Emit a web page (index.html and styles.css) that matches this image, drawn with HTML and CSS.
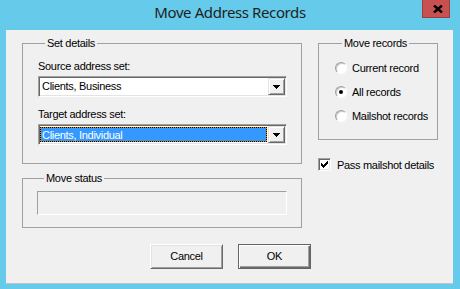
FILE: index.html
```html
<!DOCTYPE html>
<html>
<head>
<meta charset="utf-8">
<title>Move Address Records</title>
<link rel="stylesheet" href="styles.css">
</head>
<body>
<div class="titlebar">
  <span></span>
  <div class="title">Move Address Records</div>
  <div class="close">
    <svg width="10" height="8" viewBox="0 0 10 8"><path d="M1 0.5 L9 7.5 M9 0.5 L1 7.5" stroke="#000" stroke-width="2.4" fill="none"/></svg>
  </div>
</div>
<div class="client">
  <div class="main">
    <div class="col-left">
      <div class="group set-details">
        <span class="legend">Set details</span>
        <div class="field-label first">Source address set:</div>
        <div class="combo">
          <div class="combo-text">Clients, Business</div>
          <div class="drop"><svg width="7" height="4" viewBox="0 0 7 4"><rect x="0" y="0" width="7" height="1"/><rect x="1" y="1" width="5" height="1"/><rect x="2" y="2" width="3" height="1"/><rect x="3" y="3" width="1" height="1"/></svg></div>
        </div>
        <div class="field-label second">Target address set:</div>
        <div class="combo">
          <div class="combo-text selected">Clients, Individual</div>
          <div class="drop"><svg width="7" height="4" viewBox="0 0 7 4"><rect x="0" y="0" width="7" height="1"/><rect x="1" y="1" width="5" height="1"/><rect x="2" y="2" width="3" height="1"/><rect x="3" y="3" width="1" height="1"/></svg></div>
        </div>
      </div>
      <div class="group move-status">
        <span class="legend">Move status</span>
        <div class="progress"></div>
      </div>
    </div>
    <div class="col-right">
      <div class="group move-records">
        <span class="legend">Move records</span>
        <div class="opt"><span class="radio"></span><span>Current record</span></div>
        <div class="opt"><span class="radio checked"></span><span>All records</span></div>
        <div class="opt"><span class="radio"></span><span>Mailshot records</span></div>
      </div>
      <div class="check-row">
        <span class="checkbox"><svg width="13" height="13" viewBox="0 0 13 13"><rect x="3" y="5" width="1" height="3"/><rect x="4" y="6" width="1" height="3"/><rect x="5" y="7" width="1" height="3"/><rect x="6" y="6" width="1" height="3"/><rect x="7" y="5" width="1" height="3"/><rect x="8" y="4" width="1" height="3"/><rect x="9" y="3" width="1" height="3"/></svg></span>
        <span>Pass mailshot details</span>
      </div>
    </div>
  </div>
  <div class="buttons">
    <div class="btn">Cancel</div>
    <div class="btn default">OK</div>
  </div>
</div>
</body>
</html>
```
FILE: styles.css
```css
html, body {
  margin: 0;
  padding: 0;
}
body {
  background: #66cbea;
  width: 460px;
  height: 289px;
  overflow: hidden;
  font-family: "Liberation Sans", Arial, sans-serif;
  font-size: 11px;
  letter-spacing: -0.3px;
  color: #000;
}
.titlebar {
  height: 30px;
  display: grid;
  grid-template-columns: 1fr auto 1fr;
  align-items: start;
}
.title {
  font-family: "Noto Sans", "Open Sans", sans-serif;
  font-size: 15px;
  letter-spacing: -0.4px;
  line-height: 24px;
  color: #1e1e1e;
}
.close {
  justify-self: end;
  margin-right: 10px;
  width: 28px;
  height: 18px;
  box-sizing: border-box;
  background: #c75050;
  border: 1px solid #9c3c3c;
  border-top: none;
  display: flex;
  align-items: center;
  justify-content: center;
  padding-left: 4px;
}
.close svg {
  display: block;
}
.client {
  margin-left: 6px;
  width: 447px;
  height: 254px;
  box-sizing: border-box;
  background: #f0f0f0;
  border-bottom: 1px solid #c4c4c4;
  padding: 13px 0 0 16px;
}
.main {
  display: flex;
  gap: 16px;
  align-items: flex-start;
}
.col-left {
  width: 280px;
  display: flex;
  flex-direction: column;
  gap: 14px;
}
.col-right {
  width: 120px;
  display: flex;
  flex-direction: column;
}
.group {
  border: 1px solid #a0a0a0;
  box-sizing: border-box;
}
.legend {
  display: block;
  width: fit-content;
  margin: -7px 0 0 7px;
  padding: 0 2px;
  background: #f0f0f0;
  line-height: 13px;
}
.set-details {
  padding: 0 14px 18px 15px;
}
.field-label {
  line-height: 13px;
}
.field-label.first {
  margin-top: 10px;
}
.field-label.second {
  margin-top: 11px;
}
.combo {
  margin-top: 3px;
  height: 21px;
  box-sizing: border-box;
  border: 1px solid;
  border-color: #a0a0a0 #ffffff #ffffff #a0a0a0;
  box-shadow: inset 1px 1px 0 #696969, inset -1px -1px 0 #e3e3e3;
  background: #fff;
  display: flex;
  padding: 1px;
}
.combo-text {
  flex: 1;
  line-height: 17px;
  padding-left: 2px;
  white-space: nowrap;
}
.combo-text.selected {
  margin: 1px 1px 1px 0;
  line-height: 15px;
  border: 1px dotted #000;
  background: linear-gradient(#3399ff, #3399ff) padding-box, #f08000 border-box;
  color: #fff;
  padding-left: 1px;
}
.drop {
  width: 17px;
  height: 17px;
  box-sizing: border-box;
  background: #f0f0f0;
  border: 1px solid;
  border-color: #e3e3e3 #696969 #696969 #e3e3e3;
  box-shadow: inset 1px 1px 0 #ffffff, inset -1px -1px 0 #a0a0a0;
  display: flex;
  align-items: center;
  justify-content: center;
}
.drop svg {
  display: block;
  fill: #000;
  margin-top: 1px;
}
.move-status {
  padding: 0 14px 12px 14px;
}
.progress {
  margin-top: 6px;
  height: 24px;
  box-sizing: border-box;
  border: 1px solid;
  border-color: #a0a0a0 #ffffff #ffffff #a0a0a0;
}
.move-records {
  padding: 0 0 17px 16px;
}
.opt {
  display: flex;
  align-items: center;
  height: 13px;
  margin-top: 11px;
  white-space: nowrap;
}
.radio {
  width: 12px;
  height: 12px;
  box-sizing: border-box;
  border-radius: 50%;
  border: 1px solid;
  border-color: #a0a0a0 #ffffff #ffffff #a0a0a0;
  box-shadow: inset 1px 1px 0 #c8c8c8;
  background: #fff;
  margin-right: 5px;
  display: flex;
  align-items: center;
  justify-content: center;
}
.radio.checked::after {
  content: "";
  width: 4px;
  height: 4px;
  border-radius: 50%;
  background: #000;
}
.check-row {
  margin-top: 18px;
  display: flex;
  align-items: center;
  height: 13px;
  white-space: nowrap;
}
.checkbox {
  width: 13px;
  height: 13px;
  box-sizing: border-box;
  background: #fff;
  border: 1px solid;
  border-color: #a0a0a0 #ffffff #ffffff #a0a0a0;
  box-shadow: inset 1px 1px 0 #696969, inset -1px -1px 0 #e3e3e3;
  margin-right: 6px;
}
.checkbox svg {
  display: block;
  margin: -1px;
  fill: #000;
}
.buttons {
  margin-top: 16px;
  display: flex;
  justify-content: center;
  gap: 15px;
  padding-right: 14px;
}
.btn {
  width: 73px;
  height: 25px;
  box-sizing: border-box;
  background: #f0f0f0;
  border: 1px solid;
  border-color: #ffffff #696969 #696969 #ffffff;
  box-shadow: inset 1px 1px 0 #e3e3e3, inset -1px -1px 0 #a0a0a0;
  display: flex;
  align-items: center;
  justify-content: center;
  line-height: 13px;
}
.btn.default {
  border-color: #646464;
  box-shadow: inset 1px 1px 0 #ffffff, inset -1px -1px 0 #696969, inset -2px -2px 0 #a0a0a0;
}
```
